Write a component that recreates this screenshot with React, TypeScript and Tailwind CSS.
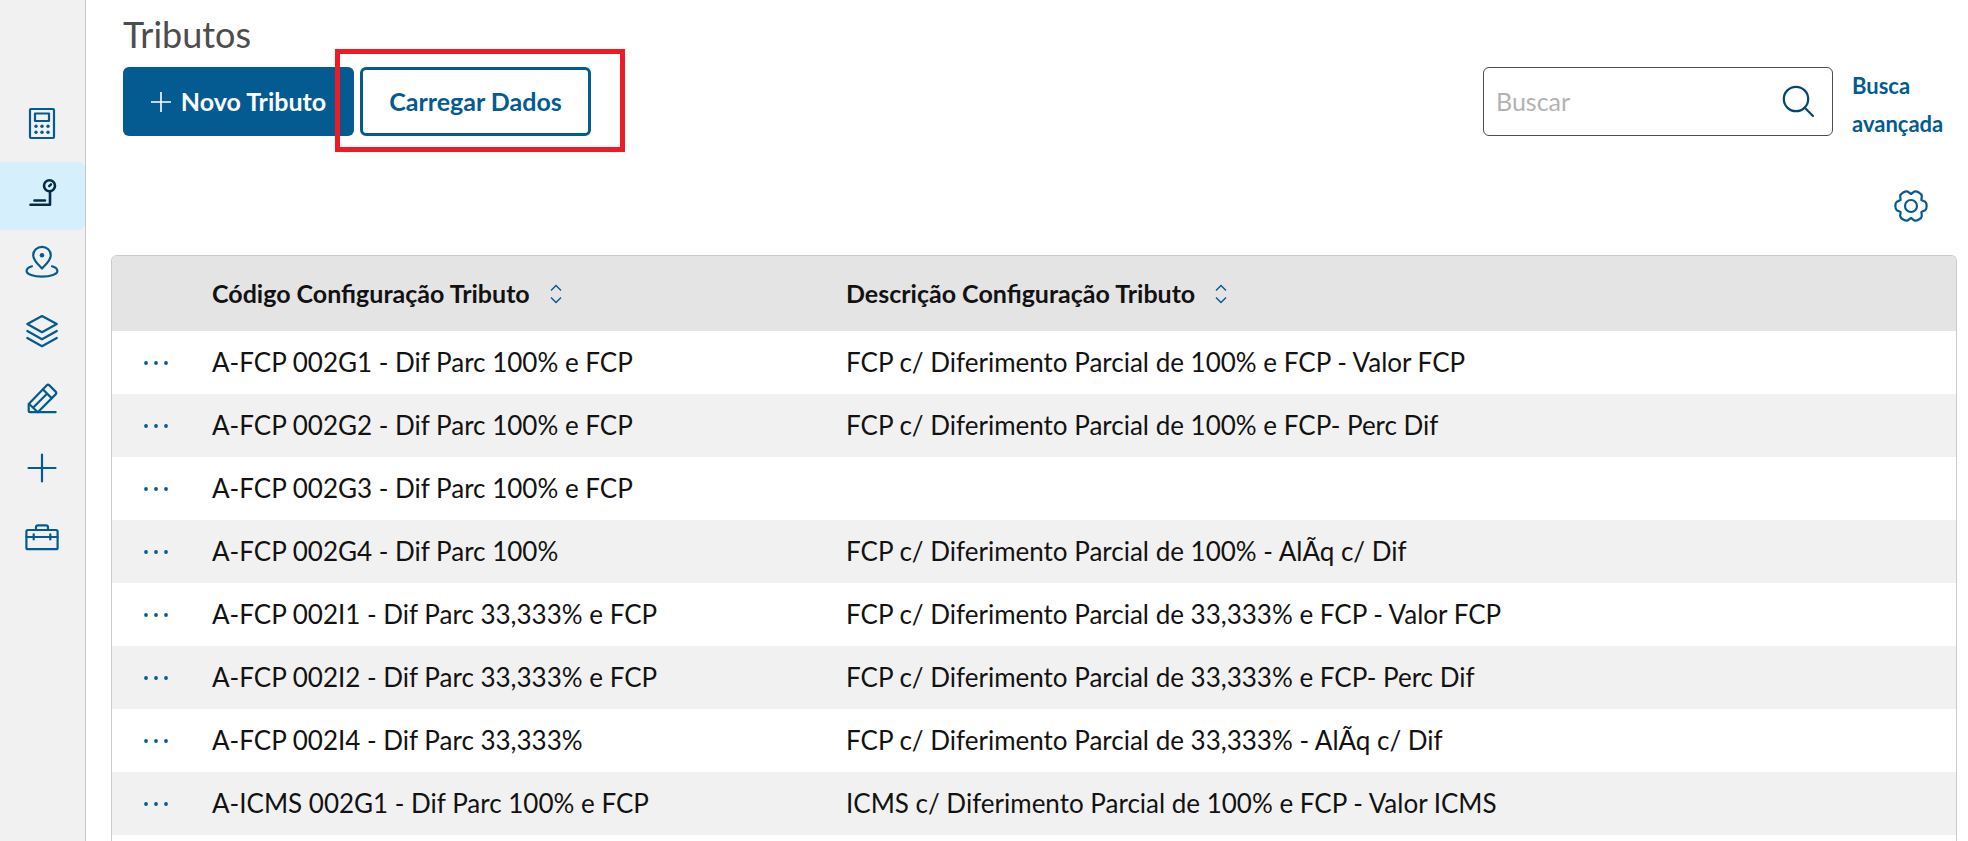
import type { ReactNode } from 'react'
import clsx from 'clsx'

type Row = { code: string; description: string }

const rows: Row[] = [
  { code: 'A-FCP 002G1 - Dif Parc 100% e FCP', description: 'FCP c/ Diferimento Parcial de 100% e FCP - Valor FCP' },
  { code: 'A-FCP 002G2 - Dif Parc 100% e FCP', description: 'FCP c/ Diferimento Parcial de 100% e FCP- Perc Dif' },
  { code: 'A-FCP 002G3 - Dif Parc 100% e FCP', description: '' },
  { code: 'A-FCP 002G4 - Dif Parc 100%', description: 'FCP c/ Diferimento Parcial de 100% - AlÃq c/ Dif' },
  { code: 'A-FCP 002I1 - Dif Parc 33,333% e FCP', description: 'FCP c/ Diferimento Parcial de 33,333% e FCP - Valor FCP' },
  { code: 'A-FCP 002I2 - Dif Parc 33,333% e FCP', description: 'FCP c/ Diferimento Parcial de 33,333% e FCP- Perc Dif' },
  { code: 'A-FCP 002I4 - Dif Parc 33,333%', description: 'FCP c/ Diferimento Parcial de 33,333% - AlÃq c/ Dif' },
  { code: 'A-ICMS 002G1 - Dif Parc 100% e FCP', description: 'ICMS c/ Diferimento Parcial de 100% e FCP - Valor ICMS' },
]

function Icon({ children }: { children: ReactNode }) {
  return (
    <svg
      viewBox="0 0 34 34"
      className="size-[34px]"
      fill="none"
      stroke="currentColor"
      strokeWidth="2.2"
      strokeLinecap="round"
      strokeLinejoin="round"
      aria-hidden="true"
    >
      {children}
    </svg>
  )
}

const navItems: { label: string; active?: boolean; icon: ReactNode }[] = [
  {
    label: 'Calculadora',
    icon: (
      <>
        <rect x="5" y="2" width="24" height="29" rx="1" />
        <rect x="10" y="6.5" width="14" height="7.5" />
        <g fill="currentColor" stroke="none">
          <circle cx="11" cy="19.3" r="1.7" />
          <circle cx="17" cy="19.3" r="1.7" />
          <circle cx="23" cy="19.3" r="1.7" />
          <circle cx="11" cy="25.3" r="1.7" />
          <circle cx="17" cy="25.3" r="1.7" />
          <circle cx="23" cy="25.3" r="1.7" />
        </g>
      </>
    ),
  },
  {
    label: 'Tributos',
    active: true,
    icon: (
      <>
        <circle cx="24.5" cy="9.7" r="5.5" strokeWidth="2.6" />
        <path d="M24.2 10.2 26 8.3" strokeWidth="2.4" />
        <path d="M25 16v12.7H5.5M9.5 24.5H20" strokeWidth="2.6" />
      </>
    ),
  },
  {
    label: 'Localização',
    icon: (
      <>
        <path d="M17 23.5C14 20.2 8.2 15.5 8.2 10.2A8.8 8.4 0 0 1 25.8 10.2C25.8 15.5 20 20.2 17 23.5Z" />
        <circle cx="17" cy="10.2" r="2.3" fill="currentColor" stroke="none" />
        <path d="M7 21.3C3.6 22.3 1.6 24 1.6 26c0 3.3 6.9 5.7 15.4 5.7s15.4-2.4 15.4-5.7c0-2-2-3.7-5.4-4.7" />
      </>
    ),
  },
  {
    label: 'Camadas',
    icon: <path d="M17 2 31.8 10 17 18.2 2.3 10ZM2.3 17 17 25.3 31.8 17M2.3 24 17 32.2 31.8 24" />,
  },
  {
    label: 'Editar',
    icon: (
      <>
        <path d="M21.6 3.4q1.4-1.3 2.8 0l6.2 6.2q1.4 1.4 0 2.8L12.8 30.2H5q-1.3 0-1.3-1.3V22Z" />
        <path d="M17.8 7.3 26.6 16.1M22 11.8 8.3 25.6M4.2 22 12.3 29.8M12.8 30.2H30.6" />
      </>
    ),
  },
  { label: 'Adicionar', icon: <path d="M17 3.5v27M3.5 17h27" /> },
  {
    label: 'Ferramentas',
    icon: (
      <>
        <rect x="1.4" y="10" width="31.2" height="19.2" rx="1.5" />
        <path d="M11 9.5V7.2Q11 5.3 13 5.3h8q2 0 2 1.9V9.5M1.5 17h31M8.7 14.3v5.2M25.3 14.3v5.2" />
      </>
    ),
  },
]

// six teeth with rounded ends and shallow notches between them
function gearPath() {
  const at = (deg: number, r: number) => {
    const a = (deg * Math.PI) / 180
    return `${(17 + r * Math.cos(a)).toFixed(2)} ${(17 + r * Math.sin(a)).toFixed(2)}`
  }
  const teeth = [0, 60, 120, 180, 240, 300].map(
    (d) => `L${at(d - 17, 14.8)}C${at(d - 10, 16.4)} ${at(d + 10, 16.4)} ${at(d + 17, 14.8)}L${at(d + 30, 12)}`,
  )
  return `M${at(-30, 12)}${teeth.join('')}Z`
}

function SortHeader({ children }: { children: ReactNode }) {
  return (
    <button className="flex items-center gap-5 font-bold">
      {children}
      <svg viewBox="0 0 12 20" className="mt-px h-5 w-3 text-[#035b91]" fill="none" stroke="currentColor" strokeWidth="1.4" aria-hidden="true">
        <path d="M1 6.5 6 1.5l5 5M1 13.5l5 5 5-5" />
      </svg>
    </button>
  )
}

export default function App() {
  return (
    <div className="flex h-screen overflow-hidden bg-white font-['Lato',sans-serif] text-[25px] text-[#121212]">
      <nav className="w-[86px] shrink-0 border-r border-[#c6c6c6] bg-[#f1f1f1] pt-[93px]">
        <ul className="flex h-[481px] flex-col">
          {navItems.map((item) => (
            <li key={item.label} className="flex-1">
              <a
                href="#"
                aria-label={item.label}
                className={clsx(
                  'flex h-full items-center justify-center rounded-r-md pr-px pb-[6px]',
                  item.active ? 'bg-[#d6effc] text-[#052c47]' : 'text-[#035b91]',
                )}
              >
                <Icon>{item.icon}</Icon>
              </a>
            </li>
          ))}
        </ul>
      </nav>

      <main className="flex min-w-0 flex-1 flex-col pt-[10px] pr-[11px] pl-[25px]">
        <header className="pr-[11px] pl-3">
          <h1 className="text-[36px] leading-[48px] text-[#4d4d4d]">Tributos</h1>

          <div className="mt-[9px] flex h-[69px] items-start">
            <div className="flex gap-[6px]">
              <button className="flex h-[69px] w-[231px] items-center justify-center gap-[10px] rounded-md bg-[#035b91] font-bold text-white">
                <svg viewBox="0 0 20 20" className="size-5" stroke="currentColor" strokeWidth="1.6" aria-hidden="true">
                  <path d="M10 0v20M0 10h20" />
                </svg>
                Novo Tributo
              </button>
              <div className="relative">
                <button className="h-[69px] w-[231px] rounded-md border-[3px] border-[#035b91] bg-white font-bold text-[#035b91]">
                  Carregar Dados
                </button>
                <div className="pointer-events-none absolute -top-[18px] -right-[34px] -bottom-4 -left-[25px] border-[5px] border-[#ed1c24]" />
              </div>
            </div>

            <form className="ml-auto flex items-start gap-[19px]" onSubmit={(e) => e.preventDefault()}>
              <div className="flex h-[69px] w-[350px] items-center rounded-md border border-[#4d4d4d] pr-[17px] pl-3">
                <input
                  type="search"
                  aria-label="Buscar"
                  placeholder="Buscar"
                  className="min-w-0 flex-1 outline-none placeholder:text-[#b3b3b3]"
                />
                <button aria-label="Pesquisar" className="text-[#044672]">
                  <Icon>
                    <circle cx="15" cy="14" r="12.2" />
                    <path d="M23.8 22.8 32 31" />
                  </Icon>
                </button>
              </div>
              <a href="#" className="w-[94px] text-[22px] leading-[38px] font-bold text-[#035b91]">
                Busca avançada
              </a>
            </form>
          </div>
        </header>

        <div className="mt-[53px] mb-8 flex justify-end pr-[29px]">
          <button aria-label="Configurar colunas" className="text-[#035b91]">
            <Icon>
              <path d={gearPath()} />
              <circle cx="17" cy="17" r="6" />
            </Icon>
          </button>
        </div>

        <div className="min-h-0 flex-1 overflow-hidden rounded-t-md border border-b-0 border-[#c8cbca]">
          <table className="w-full table-fixed text-left">
            <colgroup>
              <col className="w-[100px]" />
              <col className="w-[634px]" />
              <col />
            </colgroup>
            <thead>
              <tr className="h-[75px] bg-[#e4e4e4]">
                <td />
                <th>
                  <SortHeader>Código Configuração Tributo</SortHeader>
                </th>
                <th>
                  <SortHeader>Descrição Configuração Tributo</SortHeader>
                </th>
              </tr>
            </thead>
            <tbody className="text-[26px]">
              {rows.map((row) => (
                <tr key={row.code} className="h-[63px] even:bg-[#f1f1f1]">
                  <td className="pl-[30px]">
                    <button aria-label={`Ações de ${row.code}`} className="block text-[#035b91]">
                      <svg viewBox="0 0 28 6" className="h-[6px] w-7" fill="currentColor" aria-hidden="true">
                        <circle cx="4" cy="3" r="1.9" />
                        <circle cx="14" cy="3" r="1.9" />
                        <circle cx="24" cy="3" r="1.9" />
                      </svg>
                    </button>
                  </td>
                  <td>{row.code}</td>
                  <td>{row.description}</td>
                </tr>
              ))}
            </tbody>
          </table>
        </div>
      </main>
    </div>
  )
}
